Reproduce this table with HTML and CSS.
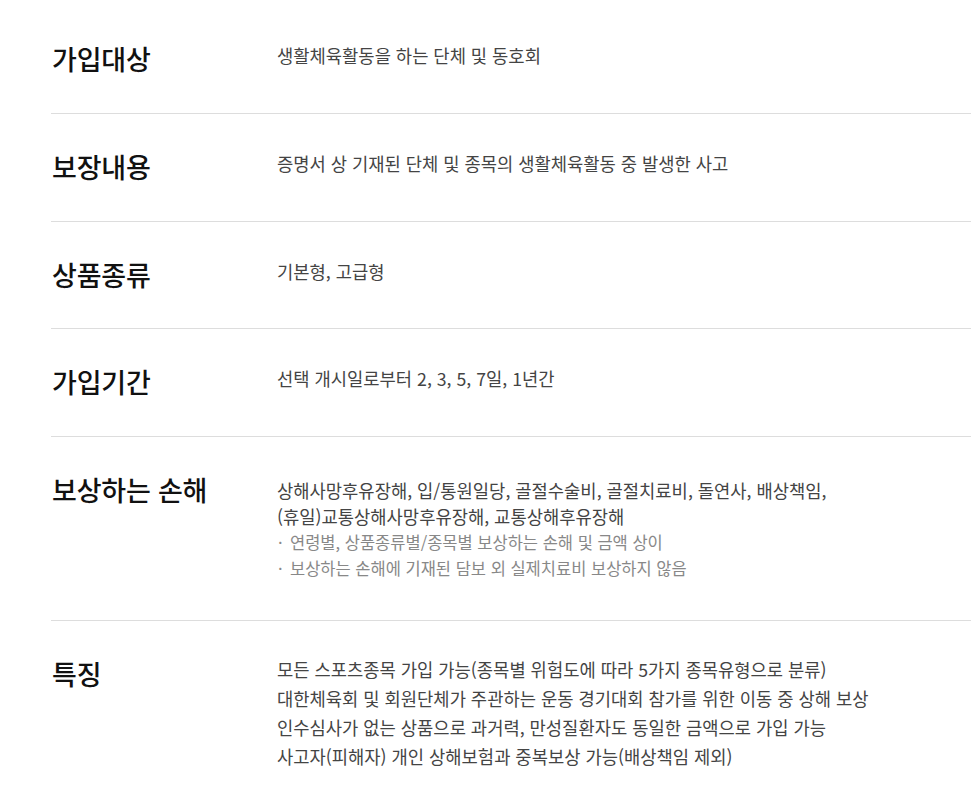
FILE: index.html
```html
<!DOCTYPE html>
<html lang="ko">
<head>
<meta charset="utf-8">
<link rel="stylesheet" href="styles.css">
</head>
<body>
<div class="info">
  <div class="row">
    <div class="label">가입대상</div>
    <div class="content">생활체육활동을 하는 단체 및 동호회</div>
  </div>
  <div class="row">
    <div class="label">보장내용</div>
    <div class="content">증명서 상 기재된 단체 및 종목의 생활체육활동 중 발생한 사고</div>
  </div>
  <div class="row">
    <div class="label">상품종류</div>
    <div class="content">기본형, 고급형</div>
  </div>
  <div class="row">
    <div class="label">가입기간</div>
    <div class="content">선택 개시일로부터 2, 3, 5, 7일, 1년간</div>
  </div>
  <div class="row">
    <div class="label">보상하는 손해</div>
    <div class="content compact">
      <p>상해사망후유장해, 입/통원일당, 골절수술비, 골절치료비, 돌연사, 배상책임,<br>(휴일)교통상해사망후유장해, 교통상해후유장해</p>
      <ul class="notes">
        <li>연령별, 상품종류별/종목별 보상하는 손해 및 금액 상이</li>
        <li>보상하는 손해에 기재된 담보 외 실제치료비 보상하지 않음</li>
      </ul>
    </div>
  </div>
  <div class="row">
    <div class="label">특징</div>
    <div class="content loose">
      모든 스포츠종목 가입 가능(종목별 위험도에 따라 5가지 종목유형으로 분류)<br>
      대한체육회 및 회원단체가 주관하는 운동 경기대회 참가를 위한 이동 중 상해 보상<br>
      인수심사가 없는 상품으로 과거력, 만성질환자도 동일한 금액으로 가입 가능<br>
      사고자(피해자) 개인 상해보험과 중복보상 가능(배상책임 제외)
    </div>
  </div>
</div>
</body>
</html>
```
FILE: styles.css
```css
* { box-sizing: border-box; }
html, body { margin: 0; padding: 0; background: #fff; }
body {
  font-family: "Noto Sans CJK KR", "Noto Sans", sans-serif;
  color: #444;
}
.info {
  padding: 6px 0 0 51px;
}
.row {
  display: flex;
  align-items: flex-start;
  padding: 36px 0 36.8px 1px;
  border-bottom: 1px solid #ddd;
}
.row:last-child { border-bottom: none; }
.label {
  width: 225px;
  flex: none;
  font-size: 27px;
  line-height: 34px;
  font-weight: 500;
  color: #111;
  letter-spacing: -0.2px;
}
.content {
  font-size: 17.7px;
  line-height: 26px;
  color: #444;
  padding-top: 0;
}
.content p { margin: 0; line-height: 26px; }
.compact { padding-top: 4px; padding-bottom: 2px; }
.loose { line-height: 29px; margin-top: -2px; }
.notes {
  list-style: none;
  margin: 0;
  padding: 0;
}
.notes li {
  position: relative;
  padding-left: 13px;
  font-size: 16.5px;
  line-height: 26px;
  color: #888;
}
.notes li::before {
  content: "·";
  position: absolute;
  left: 1px;
  top: 0;
}
```
